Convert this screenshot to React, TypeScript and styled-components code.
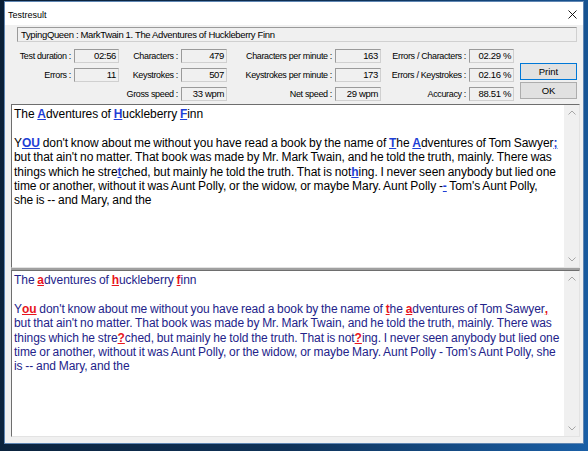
import React from "react"
import styled, { createGlobalStyle } from "styled-components"

const GlobalStyle = createGlobalStyle`
    html, body {
        margin: 0;
        padding: 0;
    }
    body {
        width: 588px;
        height: 451px;
        overflow: hidden;
        font-family: "Liberation Sans", Arial, sans-serif;
    }
`

const Desktop = styled.div`
    box-sizing: border-box;
    width: 588px;
    height: 451px;
    padding: 1px 4px 0 4px;
    background: linear-gradient(100deg, #0a1f36 0%, #0f3258 55%, #1a5fa6 100%);
`

const Window = styled.div`
    box-sizing: border-box;
    width: 580px;
    height: 443px;
    border: 1px solid #5f86b3;
    background: #f0f0f0;
    display: flex;
    flex-direction: column;
`

const TitleBar = styled.div`
    box-sizing: border-box;
    height: 23px;
    padding: 2px 6px 0 3px;
    background: #fff;
    display: flex;
    align-items: center;
    justify-content: space-between;
`

const Title = styled.span`
    font-size: 9px;
    color: #000;
`

const Client = styled.div`
    flex: 1;
    min-height: 0;
    padding: 2px 3px 6px 6px;
    display: flex;
    flex-direction: column;
`

const sunken = `
    box-sizing: border-box;
    border: 1px solid;
    border-color: #9a9a9a #d0d0d0 #d0d0d0 #9a9a9a;
    background: #f0f0f0;
`

const HeaderField = styled.div`
    ${sunken}
    height: 15px;
    margin: 0 3px 0 6px;
    padding-left: 3px;
    display: flex;
    align-items: center;
    font-size: 9.5px;
    letter-spacing: -0.35px;
    color: #000;
`

const StatsGrid = styled.div`
    margin: 4px 0 1px 6px;
    display: grid;
    grid-template-columns: 57px 45px 62px 46px 108px 46px 88px 45px 63px;
    grid-template-rows: repeat(3, 19px);
`

const Label = styled.span<{ $col: number }>`
    grid-column: ${(p) => p.$col};
    justify-self: end;
    align-self: center;
    padding-right: 3px;
    font-size: 9px;
    letter-spacing: -0.35px;
    white-space: nowrap;
    color: #000;
`

const ValueBox = styled.div<{ $col: number }>`
    ${sunken}
    grid-column: ${(p) => p.$col};
    align-self: center;
    height: 14px;
    padding-right: 2px;
    text-align: right;
    line-height: 12px;
    font-size: 9.5px;
    letter-spacing: -0.35px;
    white-space: nowrap;
    color: #000;
`

const ButtonStack = styled.div`
    grid-column: 9;
    grid-row: 1 / span 3;
    padding-bottom: 4px;
    display: flex;
    flex-direction: column;
    justify-content: flex-end;
    align-items: flex-end;
    gap: 2px;
`

const DialogButton = styled.button<{ $default?: boolean }>`
    box-sizing: border-box;
    width: 57px;
    height: 17px;
    padding: 0;
    border: 1px solid ${(p) => (p.$default ? "#0078d7" : "#adadad")};
    background: #e1e1e1;
    font-family: "Liberation Sans", Arial, sans-serif;
    font-size: 9.5px;
    color: #000;
`

const Pane = styled.div<{ $grow?: boolean }>`
    box-sizing: border-box;
    ${(p) => (p.$grow ? "flex: 1; min-height: 0;" : "height: 164px;")}
    border: 1px solid;
    border-color: #6e6e6e #e3e3e3 #e3e3e3 #6e6e6e;
    background: #fff;
    display: flex;
`

const Splitter = styled.div`
    height: 2px;
    background: #a0a0a0;
`

const TextArea = styled.div<{ $ink: string }>`
    flex: 1;
    min-width: 0;
    padding: 2px 0 0 2px;
    overflow: hidden;
    font-family: "Liberation Sans", Arial, sans-serif;
    font-size: 12px;
    line-height: 14.4px;
    letter-spacing: -0.05px;
    word-spacing: -0.5px;
    color: ${(p) => p.$ink};
    white-space: pre;
`

const Line = styled.div`
    min-height: 14.4px;
`

const Mark = styled.span<{ $tone: string }>`
    font-weight: bold;
    color: ${(p) => p.$tone};
    text-decoration: underline;
    text-decoration-thickness: 1px;
    text-underline-offset: 1px;
`

const ScrollBar = styled.div`
    width: 15px;
    background: #f0f0f0;
    display: flex;
    flex-direction: column;
    justify-content: space-between;
`

const ScrollArrow = styled.div`
    height: 15px;
    display: flex;
    align-items: center;
    justify-content: center;
`

const Chevron: React.FC<{ down?: boolean }> = ({ down }) => (
    <svg width="8" height="5" viewBox="0 0 8 5">
        <polyline
            points={down ? "0.5,0.5 4,4 7.5,0.5" : "0.5,4.5 4,1 7.5,4.5"}
            fill="none"
            stroke="#a6a6a6"
            strokeWidth="1"
        />
    </svg>
)

const CloseGlyph = () => (
    <svg width="9" height="9" viewBox="0 0 9 9">
        <path d="M0.5 0.5 L8.5 8.5 M8.5 0.5 L0.5 8.5" stroke="#000" strokeWidth="0.9" />
    </svg>
)

const expected = [
    "The [A]dventures of [H]uckleberry [F]inn",
    "",
    "Y[OU] don't know about me without you have read a book by the name of [T]he [A]dventures of Tom Sawyer[;]",
    "but that ain't no matter. That book was made by Mr. Mark Twain, and he told the truth, mainly. There was",
    "things which he stre[t]ched, but mainly he told the truth. That is not[h]ing. I never seen anybody but lied one",
    "time or another, without it was Aunt Polly, or the widow, or maybe Mary. Aunt Polly -[-] Tom's Aunt Polly,",
    "she is -- and Mary, and the",
]

const typed = [
    "The [a]dventures of [h]uckleberry [f]inn",
    "",
    "Y[ou] don't know about me without you have read a book by the name of [t]he [a]dventures of Tom Sawyer[,]",
    "but that ain't no matter. That book was made by Mr. Mark Twain, and he told the truth, mainly. There was",
    "things which he stre[?]ched, but mainly he told the truth. That is not[?]ing. I never seen anybody but lied one",
    "time or another, without it was Aunt Polly, or the widow, or maybe Mary. Aunt Polly - Tom's Aunt Polly, she",
    "is -- and Mary, and the",
]

const stats = [
    { row: 1, col: 1, label: "Test duration :", value: "02:56" },
    { row: 1, col: 3, label: "Characters :", value: "479" },
    { row: 1, col: 5, label: "Characters per minute :", value: "163" },
    { row: 1, col: 7, label: "Errors / Characters :", value: "02.29 %" },
    { row: 2, col: 1, label: "Errors :", value: "11" },
    { row: 2, col: 3, label: "Keystrokes :", value: "507" },
    { row: 2, col: 5, label: "Keystrokes per minute :", value: "173" },
    { row: 2, col: 7, label: "Errors / Keystrokes :", value: "02.16 %" },
    { row: 3, col: 3, label: "Gross speed :", value: "33 wpm" },
    { row: 3, col: 5, label: "Net speed :", value: "29 wpm" },
    { row: 3, col: 7, label: "Accuracy :", value: "88.51 %" },
]

const renderLine = (text: string, tone: string) =>
    text.split(/(\[[^\]]+\])/).map((part, i) =>
        part.startsWith("[") ? (
            <Mark key={i} $tone={tone}>
                {part.slice(1, -1)}
            </Mark>
        ) : (
            <React.Fragment key={i}>{part}</React.Fragment>
        ),
    )

const TextPane: React.FC<{ lines: string[]; ink: string; tone: string; grow?: boolean }> = ({
    lines,
    ink,
    tone,
    grow,
}) => (
    <Pane $grow={grow}>
        <TextArea $ink={ink}>
            {lines.map((l, i) => (
                <Line key={i}>{renderLine(l, tone)}</Line>
            ))}
        </TextArea>
        <ScrollBar>
            <ScrollArrow>
                <Chevron />
            </ScrollArrow>
            <ScrollArrow>
                <Chevron down />
            </ScrollArrow>
        </ScrollBar>
    </Pane>
)

export default function App() {
    return (
        <Desktop>
            <GlobalStyle />
            <Window>
                <TitleBar>
                    <Title>Testresult</Title>
                    <CloseGlyph />
                </TitleBar>
                <Client>
                    <HeaderField>TypingQueen : MarkTwain 1. The Adventures of Huckleberry Finn</HeaderField>
                    <StatsGrid>
                        {stats.map((s) => (
                            <React.Fragment key={s.label}>
                                <Label $col={s.col} style={{ gridRow: s.row }}>
                                    {s.label}
                                </Label>
                                <ValueBox $col={s.col + 1} style={{ gridRow: s.row }}>
                                    {s.value}
                                </ValueBox>
                            </React.Fragment>
                        ))}
                        <ButtonStack>
                            <DialogButton $default>Print</DialogButton>
                            <DialogButton>OK</DialogButton>
                        </ButtonStack>
                    </StatsGrid>
                    <TextPane lines={expected} ink="#000" tone="#1f3fd6" />
                    <Splitter />
                    <TextPane lines={typed} ink="#23238a" tone="#e8141c" grow />
                </Client>
            </Window>
        </Desktop>
    )
}
